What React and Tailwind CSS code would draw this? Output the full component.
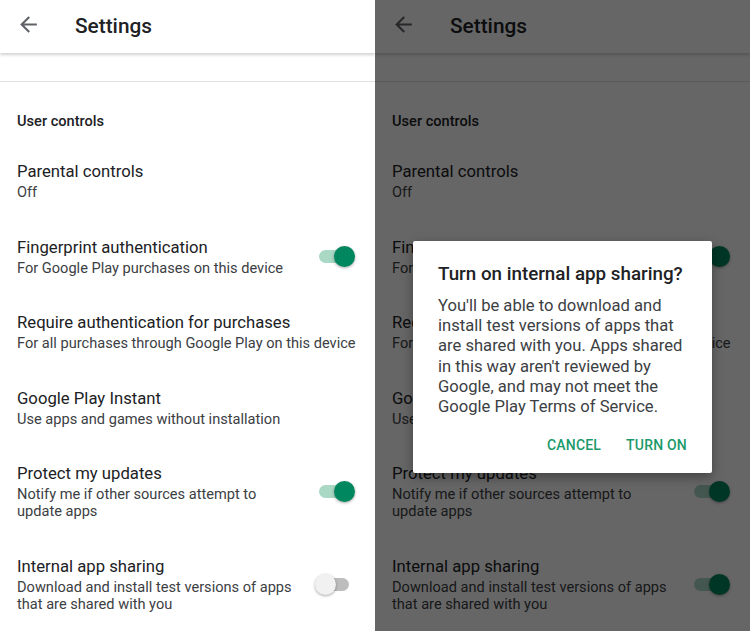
import React from "react";

function BackArrow() {
  return (
    <svg width="25" height="25" viewBox="0 0 24 24" className="shrink-0">
      <path
        d="M20 11H7.83l5.59-5.59L12 4l-8 8 8 8 1.41-1.41L7.83 13H20v-2z"
        fill="#5f6368"
      />
    </svg>
  );
}

function Toggle({ on }) {
  return (
    <div className="relative w-[40px] h-[22px] shrink-0 flex items-center">
      <div
        className={
          on
            ? "absolute left-[4px] right-[4px] h-[13px] rounded-full bg-[#a9d8c5]"
            : "absolute left-[4px] right-[6px] h-[13px] rounded-full bg-[#bdbdbd]"
        }
      />
      {on ? (
        <div className="absolute right-0 w-[21px] h-[21px] rounded-full bg-[#01875f] shadow-[0_1px_3px_rgba(0,0,0,0.35)]" />
      ) : (
        <div className="absolute left-0 w-[21px] h-[21px] rounded-full bg-[#f1f1f1] shadow-[0_1px_3px_rgba(0,0,0,0.35)]" />
      )}
    </div>
  );
}

function Row({ title, sub, toggle }) {
  return (
    <div className="flex items-center pl-[17px] pr-[20px]">
      <div className="flex-1 min-w-0">
        <div className="text-[16.7px] leading-[22px] text-[#202124]">{title}</div>
        <div className="mt-[1px] text-[14.6px] leading-[17px] text-[#3c4043] whitespace-nowrap">{sub}</div>
      </div>
      {toggle !== undefined && <Toggle on={toggle} />}
    </div>
  );
}

function Panel({ internalOn }) {
  return (
    <div className="w-[375px] h-[631px] bg-white flex flex-col overflow-hidden">
      <div className="relative z-10 h-[53px] shrink-0 bg-white flex items-center shadow-[0_2px_3px_rgba(0,0,0,0.18)]">
        <div className="pl-[16px] w-[75px] pb-[4px]">
          <BackArrow />
        </div>
        <div className="text-[20.8px] font-medium text-[#202124] leading-none">
          Settings
        </div>
      </div>
      <div className="h-[29px] shrink-0 border-b border-[#e0e0e0]" />
      <div className="pl-[17px] mt-[29px] text-[14.6px] leading-[20px] font-medium text-[#202124]">
        User controls
      </div>
      <div className="flex flex-col gap-[35.5px] mt-[30px]">
        <Row title="Parental controls" sub="Off" />
        <Row
          title="Fingerprint authentication"
          sub="For Google Play purchases on this device"
          toggle={true}
        />
        <Row
          title="Require authentication for purchases"
          sub="For all purchases through Google Play on this device"
        />
        <Row
          title="Google Play Instant"
          sub="Use apps and games without installation"
        />
        <Row
          title="Protect my updates"
          sub={
            <>
              Notify me if other sources attempt to
              <br />
              update apps
            </>
          }
          toggle={true}
        />
        <Row
          title="Internal app sharing"
          sub={
            <>
              Download and install test versions of apps
              <br />
              that are shared with you
            </>
          }
          toggle={internalOn}
        />
      </div>
    </div>
  );
}

export default function App() {
  return (
    <div
      className="w-[750px] h-[631px] flex overflow-hidden bg-white"
      style={{ fontFamily: "Roboto, 'Noto Sans', Arial, sans-serif" }}
    >
      <Panel internalOn={false} />
      <div className="relative w-[375px] h-[631px]">
        <Panel internalOn={true} />
        <div className="absolute inset-0 z-20 bg-black/60" />
        <div className="absolute z-30 top-[241px] left-[38px] w-[299px] h-[232px] bg-white rounded-[2px] shadow-[0_4px_12px_rgba(0,0,0,0.35)] flex flex-col">
          <div className="pl-[25px] pr-[10px] pt-[21px] text-[18.8px] leading-[24px] font-medium text-[#202124] whitespace-nowrap">
            Turn on internal app sharing?
          </div>
          <div className="pl-[25px] pr-[10px] mt-[10px] text-[16.6px] leading-[20.2px] text-[#3c4043] whitespace-nowrap">
            You'll be able to download and
            <br />
            install test versions of apps that
            <br />
            are shared with you. Apps shared
            <br />
            in this way aren't reviewed by
            <br />
            Google, and may not meet the
            <br />
            Google Play Terms of Service.
          </div>
          <div className="mt-auto mb-[18px] flex justify-end items-center gap-[25px] pr-[25px] text-[14px] leading-[20px] font-medium text-[#1b9a6b] tracking-[0.2px]">
            <span>CANCEL</span>
            <span>TURN ON</span>
          </div>
        </div>
      </div>
    </div>
  );
}
